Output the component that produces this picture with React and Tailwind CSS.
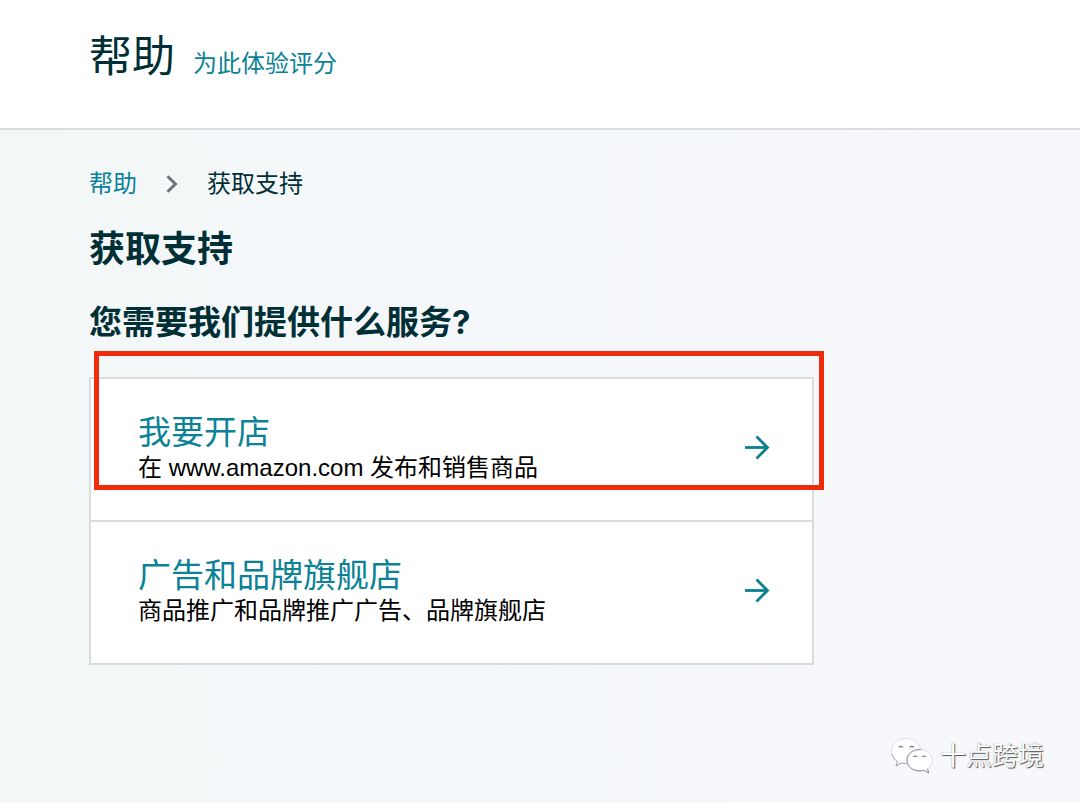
import React from "react";

const services = [
  {
    title: "我要开店",
    description: "在 www.amazon.com 发布和销售商品",
    highlighted: true,
  },
  {
    title: "广告和品牌旗舰店",
    description: "商品推广和品牌推广广告、品牌旗舰店",
    highlighted: false,
  },
];

function ChevronIcon() {
  return (
    <svg width="12" height="18" viewBox="0 0 12 18" fill="none" stroke="#6f7677" strokeWidth="3" aria-hidden="true">
      <path d="M1.5 1.2 L9.5 9 L1.5 16.8" />
    </svg>
  );
}

function ArrowIcon() {
  return (
    <svg
      className="shrink-0"
      width="26"
      height="26"
      viewBox="0 0 26 26"
      fill="none"
      stroke="#0b8091"
      strokeWidth="2.8"
      aria-hidden="true"
    >
      <path d="M1 12.5 H24" />
      <path d="M12.5 1.5 L23.5 12.5 L12.5 23.5" />
    </svg>
  );
}

function ChatLogo() {
  return (
    <svg width="44" height="38" viewBox="0 0 44 38" fill="#ffffff" stroke="#a2a4a8" strokeWidth="1" strokeLinejoin="round" aria-hidden="true">
      <path d="M16 1.5 C7.5 1.5 1.5 7 1.5 14 C1.5 18.5 3.8 22 7.5 24.5 L6 29 L11.5 26 C13 26.4 14.5 26.6 16 26.6 C24.5 26.6 30.5 21 30.5 14 C30.5 7 24.5 1.5 16 1.5 Z" stroke="#dcdee1" />
      <path d="M2 17 C2.8 20.5 4.8 22.8 7.5 24.5 L6 29 L11.5 26 C13 26.4 14.5 26.6 16 26.6" fill="none" />
      <path d="M29.5 12.5 C22.5 12.5 17 17.2 17 23.2 C17 29.2 22.5 33.9 29.5 33.9 C31 33.9 32.4 33.7 33.7 33.3 L38.8 36 L37.5 31.8 C40.5 29.8 42.3 26.8 42.3 23.2 C42.3 17.2 36.5 12.5 29.5 12.5 Z" stroke="#dcdee1" />
      <path d="M31 12.6 C22.5 12 17 17.2 17 23.2 C17 29.2 22.5 33.9 29.5 33.9 C31 33.9 32.4 33.7 33.7 33.3 L38.8 36 L37.5 31.8" fill="none" stroke="#8d9094" />
      <g fill="none" stroke="#77797d" strokeWidth="1.2">
        <path d="M9 10.5 A2 2 0 0 1 12.6 10.5" />
        <path d="M20 10.5 A2 2 0 0 1 23.6 10.5" />
        <path d="M23.5 20 A1.8 1.8 0 0 1 26.7 20" />
        <path d="M32.5 20 A1.8 1.8 0 0 1 35.7 20" />
      </g>
    </svg>
  );
}

export default function App() {
  return (
    <div className="relative flex min-h-screen flex-col bg-linear-to-r from-[#f4f7f8] to-[#f6f8fc] font-[Inter,'Noto_Sans_CJK_SC',sans-serif] text-[#002f36]">
      <header className="flex h-[130px] items-baseline gap-[18px] border-b-2 border-[#d9dddf] bg-white px-[89px] pt-[26px]">
        <h1 className="text-[43px] leading-[60px]">帮助</h1>
        <a href="#rate" className="text-2xl text-[#0b8296]">
          为此体验评分
        </a>
      </header>

      <main className="px-[89px] pt-9">
        <nav aria-label="面包屑" className="flex items-center gap-[29px] text-2xl leading-9">
          <a href="#help" className="text-[#0b8296]">
            帮助
          </a>
          <ChevronIcon />
          <span aria-current="page">获取支持</span>
        </nav>
        <h2 className="mt-5 text-4xl leading-[54px] font-bold">获取支持</h2>
        <h3 className="mt-[21px] text-[33px] leading-[50px] font-bold">您需要我们提供什么服务?</h3>

        <ul className="mt-[30px] max-w-[725px] border-2 border-[#d8dcdd] bg-white">
          {services.map((service) => (
            <li key={service.title} className="relative border-b-2 border-[#d8dcdd] last:border-b-0">
              <a href="#service" className="flex items-center justify-between pt-[33px] pr-[42px] pb-9 pl-[47px]">
                <span className="flex flex-col">
                  <span className="text-[33px] leading-10 text-[#0b8296]">{service.title}</span>
                  <span className="font-['Liberation_Sans','Noto_Sans_CJK_SC',sans-serif] text-2xl text-black">
                    {service.description}
                  </span>
                </span>
                <ArrowIcon />
              </a>
              {service.highlighted && (
                <div className="pointer-events-none absolute -top-7 -right-3 bottom-[30px] left-[3px] border-5 border-[#ee2c0c]" />
              )}
            </li>
          ))}
        </ul>
      </main>

      <div className="absolute right-9 bottom-7 flex items-center gap-1.5">
        <ChatLogo />
        <span className="text-[26px] leading-9 text-white [text-shadow:1px_1px_1px_#55585c,0_0_1px_#777a7e]">十点跨境</span>
      </div>
    </div>
  );
}
